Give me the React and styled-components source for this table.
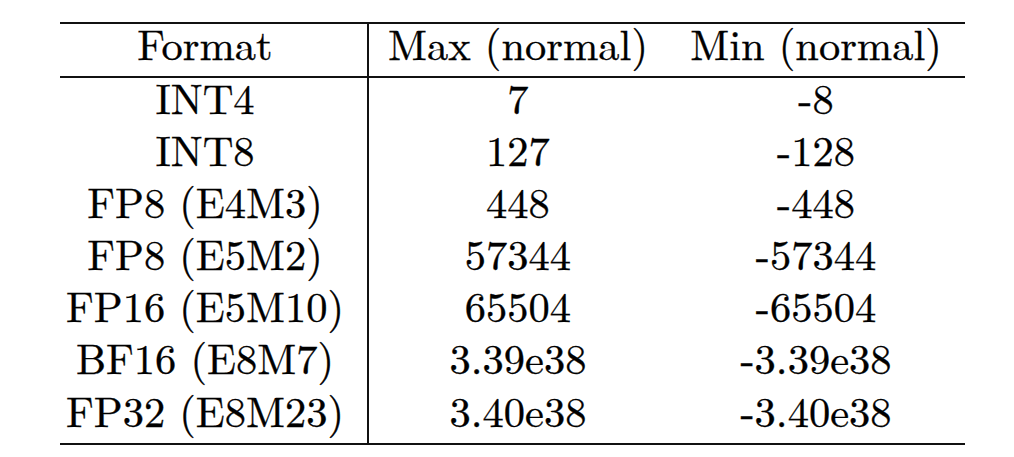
import React from 'react';
import styled, { createGlobalStyle } from 'styled-components';

const rows = [
  ['INT4', '7', '-8'],
  ['INT8', '127', '-128'],
  ['FP8 (E4M3)', '448', '-448'],
  ['FP8 (E5M2)', '57344', '-57344'],
  ['FP16 (E5M10)', '65504', '-65504'],
  ['BF16 (E8M7)', '3.39e38', '-3.39e38'],
  ['FP32 (E8M23)', '3.40e38', '-3.40e38'],
];

const App = () => {
  return (
    <Page>
      <GlobalStyle />
      <Table>
        <thead>
          <HeadRow>
            <FirstCell>Format</FirstCell>
            <Cell>Max (normal)</Cell>
            <Cell>Min (normal)</Cell>
          </HeadRow>
        </thead>
        <tbody>
          {rows.map((r) => (
            <Row key={r[0]}>
              <FirstCell>{r[0]}</FirstCell>
              <Cell>{r[1]}</Cell>
              <Cell>{r[2]}</Cell>
            </Row>
          ))}
        </tbody>
      </Table>
    </Page>
  );
};

export default App;

const GlobalStyle = createGlobalStyle`
    html, body {
        margin: 0;
        padding: 0;
        background: #fff;
    }
`;

const Page = styled.div`
    width: 1014px;
    height: 457px;
    padding: 22px 0 0 60px;
    box-sizing: border-box;
    color: #000;
`;

const Table = styled.table`
    width: 904px;
    border-collapse: collapse;
    border-top: 2px solid #111;
    border-bottom: 2px solid #111;
    table-layout: fixed;
`;

const Row = styled.tr`
    height: 52px;
    &:last-child {
        height: 54px;
    }
`;

const HeadRow = styled.tr`
    height: 51px;
    border-bottom: 2px solid #111;
`;

const Cell = styled.td`
    font-family: "Latin Modern Roman", "Liberation Serif", serif;
    font-size: 42.5px;
    line-height: 36px;
    color: #000;
    -webkit-text-stroke: 0.35px #000;
    padding: 0 0 16px 0;
    text-align: center;
    vertical-align: middle;
    width: 298px;
    white-space: nowrap;
`;

const FirstCell = styled(Cell)`
    width: 290px;
    padding-right: 17px;
    border-right: 2px solid #111;
`;
